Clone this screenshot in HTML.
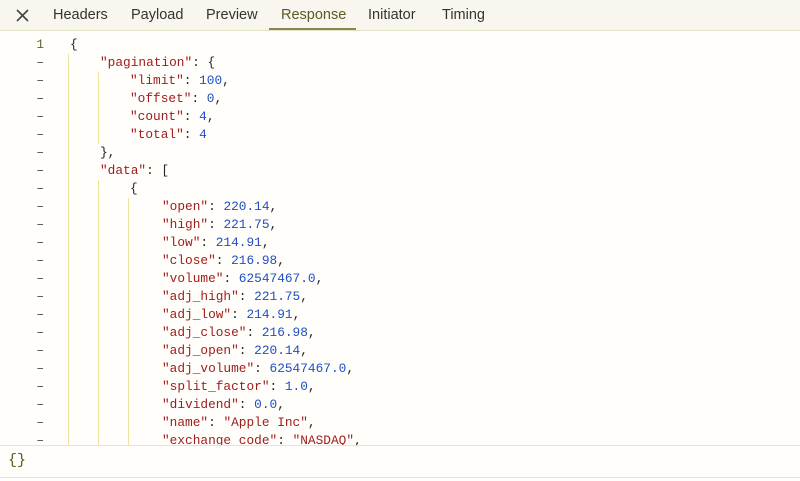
<!DOCTYPE html>
<html><head><style>
body{margin:0;width:800px;height:481px;overflow:hidden;background:#fffefa;font-family:"Liberation Sans",sans-serif;position:relative}
.top{position:absolute;left:0;top:0;width:800px;height:30px;background:#f8f6ee;border-bottom:1px solid #e6e2c8}
.tab{position:absolute;top:7px;font-size:14.5px;color:#333}
.act{color:#5d5a24}
.ul{position:absolute;left:269px;top:28px;width:87px;height:2px;background:#8a8650}
.code{position:absolute;left:0;top:36px;font-family:"Liberation Mono",monospace;font-size:12.8px;white-space:pre;line-height:18px}
.ln{position:absolute;left:0;width:44px;text-align:right;color:#444}
.k{color:#a11d1d}.n{color:#1f4fc4}.p{color:#222}
.g{position:absolute;width:1px;background:#ede29e}
.bot{position:absolute;left:0;top:445px;width:800px;height:31px;background:#fffefa;border-top:1px solid #ece6b0;border-bottom:1px solid #ece6b0}
</style></head><body>
<div class="top">
<svg style="position:absolute;left:16px;top:9px" width="13" height="13"><path d="M1 1L12 12M12 1L1 12" stroke="#444" stroke-width="1.6"/></svg>
<span class="tab" style="left:53px">Headers</span>
<span class="tab" style="left:131px">Payload</span>
<span class="tab" style="left:206px">Preview</span>
<span class="tab act" style="left:281px">Response</span>
<span class="tab" style="left:368px">Initiator</span>
<span class="tab" style="left:442px">Timing</span>
<div class="ul"></div>
</div>
<div class="g" style="left:68px;top:54px;height:391px"></div>
<div class="g" style="left:98px;top:72px;height:72px"></div>
<div class="g" style="left:98px;top:180px;height:265px"></div>
<div class="g" style="left:128px;top:198px;height:247px"></div>
<div class="code">
<div id="L"></div>
</div>
<script>
var lines=[
[0,'<span class="p">{</span>'],
[1,'<span class="k">"pagination"</span>: {'],
[2,'<span class="k">"limit"</span>: <span class="n">100</span>,'],
[2,'<span class="k">"offset"</span>: <span class="n">0</span>,'],
[2,'<span class="k">"count"</span>: <span class="n">4</span>,'],
[2,'<span class="k">"total"</span>: <span class="n">4</span>'],
[1,'},'],
[1,'<span class="k">"data"</span>: ['],
[2,'{'],
[3,'<span class="k">"open"</span>: <span class="n">220.14</span>,'],
[3,'<span class="k">"high"</span>: <span class="n">221.75</span>,'],
[3,'<span class="k">"low"</span>: <span class="n">214.91</span>,'],
[3,'<span class="k">"close"</span>: <span class="n">216.98</span>,'],
[3,'<span class="k">"volume"</span>: <span class="n">62547467.0</span>,'],
[3,'<span class="k">"adj_high"</span>: <span class="n">221.75</span>,'],
[3,'<span class="k">"adj_low"</span>: <span class="n">214.91</span>,'],
[3,'<span class="k">"adj_close"</span>: <span class="n">216.98</span>,'],
[3,'<span class="k">"adj_open"</span>: <span class="n">220.14</span>,'],
[3,'<span class="k">"adj_volume"</span>: <span class="n">62547467.0</span>,'],
[3,'<span class="k">"split_factor"</span>: <span class="n">1.0</span>,'],
[3,'<span class="k">"dividend"</span>: <span class="n">0.0</span>,'],
[3,'<span class="k">"name"</span>: <span class="k">"Apple Inc"</span>,'],
[3,'<span class="k">"exchange_code"</span>: <span class="k">"NASDAQ"</span>,']];
var L=[70,100,130,162];
var h='';
lines.forEach(function(l,i){
h+='<div style="position:absolute;top:'+(i*18)+'px;left:0;width:800px;height:18px">'+
'<span class="ln" style="'+(i==0?'color:#5d6a20;':'')+'">'+(i==0?'1':'–')+'</span>'+
'<span style="position:absolute;left:'+L[l[0]]+'px" class="p">'+l[1]+'</span></div>';
});
document.getElementById('L').innerHTML=h;
</script>
<div class="bot"><span style="position:absolute;left:8px;top:6px;font-family:'Liberation Mono',monospace;font-size:15px;color:#5d5a24">{}</span></div>
</body></html>
